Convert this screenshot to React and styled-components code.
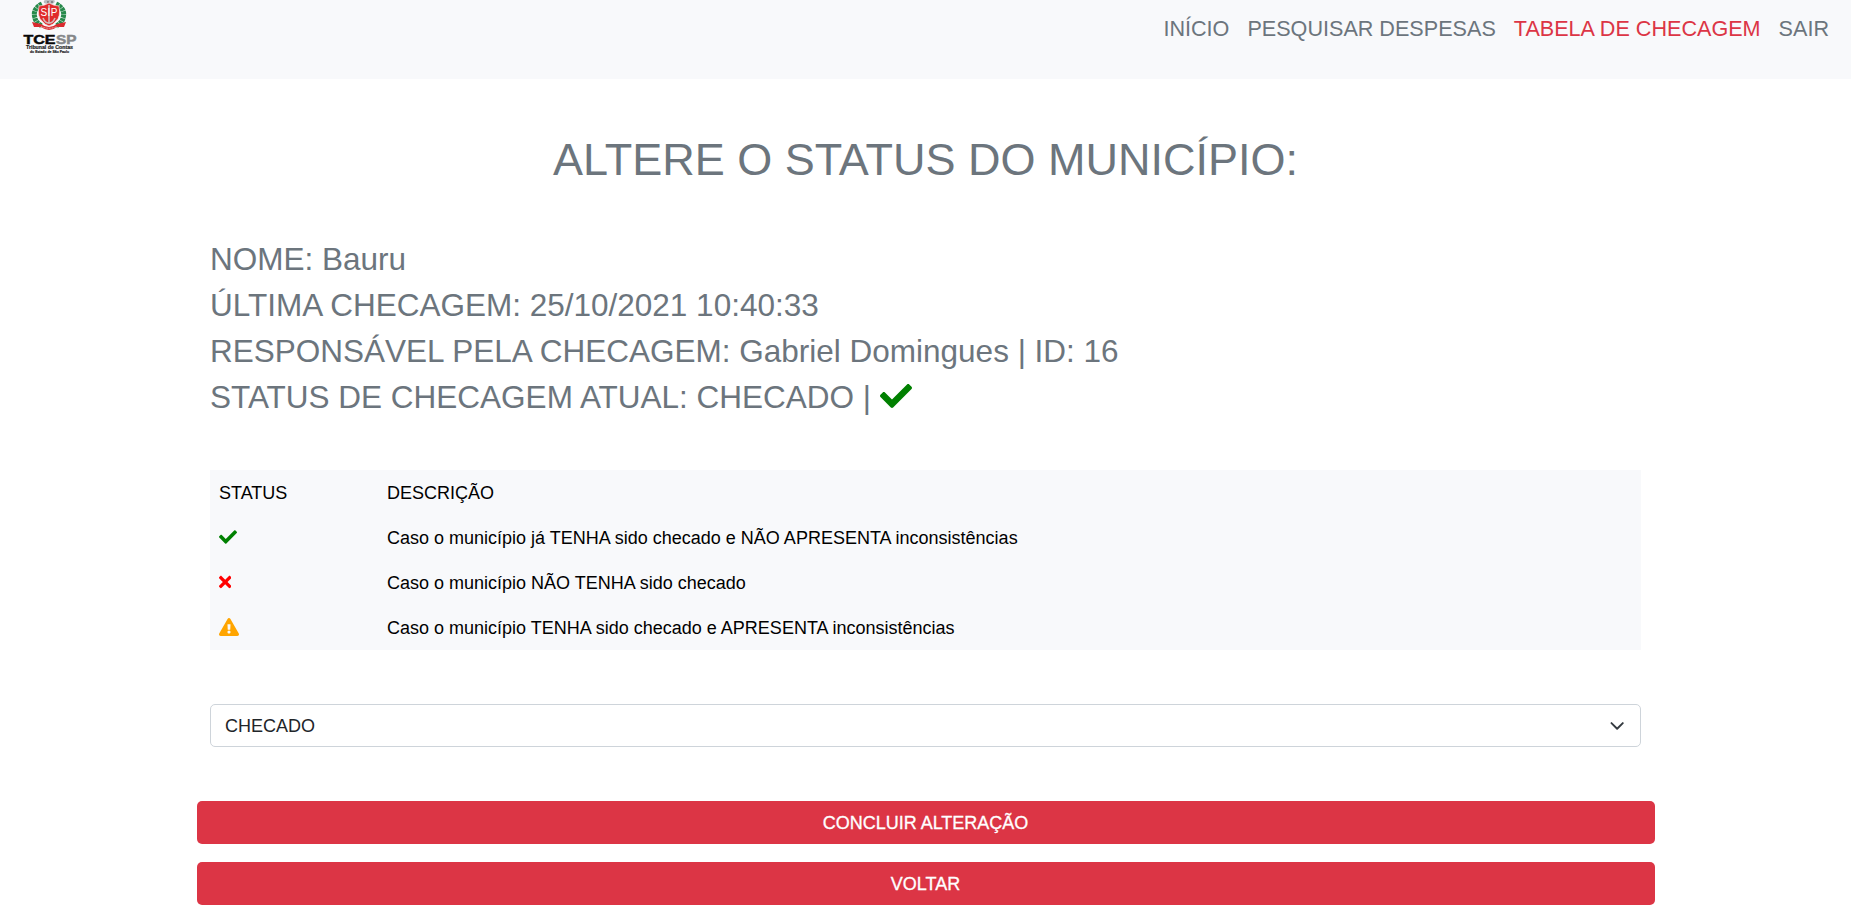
import React from "react";
import styled, { createGlobalStyle } from "styled-components";
import { FaCheck, FaTimes, FaExclamationTriangle } from "react-icons/fa";

const GlobalStyle = createGlobalStyle`
  *, *::before, *::after { box-sizing: border-box; }
  body {
    margin: 0;
    overflow: hidden;
    background: #fff;
    color: #000;
    font: 18px/27px "Liberation Sans", Arial, sans-serif;
  }
`;

const Navbar = styled.header`
  display: flex;
  justify-content: space-between;
  align-items: flex-start;
  height: 78.5px;
  padding: 0 22px;
  background: #f8f9fb;
`;

const Brand = styled.a`
  display: block;
  width: 56px;
  height: 56px;
  svg { display: block; }
`;

const Nav = styled.nav`
  display: flex;
  gap: 18px;
  padding-top: 12px;
`;

const NavLink = styled.a`
  font-size: 21.6px;
  line-height: 33px;
  color: ${(p) => (p.$active ? "#dc3545" : "#6c757d")};
`;

const Main = styled.main`
  width: 1458px;
  margin: 0 auto;
`;

const Title = styled.h1`
  margin: 54.5px 0 0;
  font-size: 45px;
  font-weight: 400;
  line-height: 54px;
  text-align: center;
  color: #6c757d;
`;

const Content = styled.section`
  padding: 0 14px 0 13.5px;
`;

const Info = styled.div`
  margin-top: 49px;
  font-size: 31.5px;
  line-height: 46px;
  color: #6c757d;
`;

const InfoLine = styled.p`
  margin: 0;
  svg { vertical-align: -4px; }
`;

const Table = styled.table`
  width: 100%;
  margin-top: 50px;
  border-collapse: collapse;
  background: #f8f9fb;
`;

const Cell = styled.td`
  height: 45px;
  padding: 1px 9px 0;
  width: ${(p) => p.$width || "auto"};
  svg { display: block; margin-top: -2px; }
`;

const Select = styled.div`
  display: flex;
  align-items: center;
  justify-content: space-between;
  height: 43px;
  margin-top: 54px;
  padding: 1px 14px 0 14px;
  border: 1px solid #ced4da;
  border-radius: 5px;
  color: #212529;
`;

const Actions = styled.div`
  display: grid;
  gap: 18px;
  margin-top: 54px;
`;

const Button = styled.button`
  height: 43px;
  padding: 1px 0 0;
  border: 0;
  border-radius: 5px;
  background: #dc3545;
  color: #fff;
  font: inherit;
  -webkit-text-stroke: 0.3px #fff;
`;

function Logo() {
  return (
    <svg width="56" height="56" viewBox="0 0 56 56" fontFamily="Liberation Sans, Arial, sans-serif">
      <path d="M22 3 Q21 0 24 0 H31 Q34 0 32 3 L28 5Z" fill="#b9bdc0" />
      <path d="M25 2h2M29 2h2" stroke="#555" />
      <path d="M20 4Q10 9 13 18Q14 23 20 26" fill="none" stroke="#278a4b" strokeWidth="5" strokeDasharray="3 .5" />
      <path d="M34 4Q44 9 41 18Q40 23 34 26" fill="none" stroke="#278a4b" strokeWidth="5" strokeDasharray="3 .5" />
      <path d="M17 6Q22 6 27 3Q32 6 37 6Q39 17 34 21Q31 25 27 26Q23 25 20 21Q15 17 17 6Z" fill="#e02a2b" stroke="#f6dcda" strokeWidth=".7" />
      <path d="M27 5V24M21 18Q23 23 27 23Q31 23 33 18" fill="none" stroke="#d3b9b9" strokeWidth="1.6" />
      <text x="27" y="15.5" fontSize="10" textAnchor="middle" fill="#fff" textLength="17">SIP</text>
      <path d="M10 22L19 24Q27 30 35 24L44 22L42 27L35 27Q27 33 19 27L12 27Z" fill="#d92b2e" />
      <path d="M19 26.5Q27 30 35 26.5" fill="none" stroke="#f3dada" strokeWidth=".8" strokeDasharray="1 .6" />
      <g fontWeight="700" strokeWidth=".5">
        <text x="1.5" y="43.5" fontSize="13.5" textLength="32" lengthAdjust="spacingAndGlyphs" fill="#080808" stroke="#080808">TCE</text>
        <text x="34" y="43.5" fontSize="13.5" textLength="20.5" lengthAdjust="spacingAndGlyphs" fill="#858789" stroke="#858789">SP</text>
      </g>
      <g fontWeight="700" fill="#222" stroke="#222" strokeWidth=".2">
        <text x="4" y="49" fontSize="5.2" textLength="47" lengthAdjust="spacingAndGlyphs">Tribunal de Contas</text>
        <text x="8" y="53.2" fontSize="3.7" textLength="39" lengthAdjust="spacingAndGlyphs">do Estado de São Paulo</text>
      </g>
    </svg>
  );
}

function Chevron() {
  return (
    <svg width="18" height="18" viewBox="0 0 16 16" fill="none">
      <path d="M2 5l6 6 6-6" transform="translate(1.4 1.2) scale(.84)" stroke="#343a40" strokeWidth="2" strokeLinecap="round" strokeLinejoin="round" />
    </svg>
  );
}

const CrossIcon = styled(FaTimes)`
  width: 12.4px;
  height: 18px;
`;

const rows = [
  [<FaCheck color="green" size={18} />, "Caso o município já TENHA sido checado e NÃO APRESENTA inconsistências"],
  [<CrossIcon color="red" />, "Caso o município NÃO TENHA sido checado"],
  [<FaExclamationTriangle color="orange" size={20} />, "Caso o município TENHA sido checado e APRESENTA inconsistências"],
];

export default function App() {
  return (
    <>
      <GlobalStyle />
      <Navbar>
        <Brand><Logo /></Brand>
        <Nav>
          <NavLink>INÍCIO</NavLink>
          <NavLink>PESQUISAR DESPESAS</NavLink>
          <NavLink $active>TABELA DE CHECAGEM</NavLink>
          <NavLink>SAIR</NavLink>
        </Nav>
      </Navbar>
      <Main>
        <Title>ALTERE O STATUS DO MUNICÍPIO:</Title>
        <Content>
          <Info>
            <InfoLine>NOME: Bauru</InfoLine>
            <InfoLine>ÚLTIMA CHECAGEM: 25/10/2021 10:40:33</InfoLine>
            <InfoLine>RESPONSÁVEL PELA CHECAGEM: Gabriel Domingues | ID: 16</InfoLine>
            <InfoLine>STATUS DE CHECAGEM ATUAL: CHECADO | <FaCheck color="green" size={32} /></InfoLine>
          </Info>
          <Table>
            <tbody>
              <tr>
                <Cell $width="168px">STATUS</Cell>
                <Cell>DESCRIÇÃO</Cell>
              </tr>
              {rows.map(([icon, text]) => (
                <tr key={text}>
                  <Cell>{icon}</Cell>
                  <Cell>{text}</Cell>
                </tr>
              ))}
            </tbody>
          </Table>
          <Select>CHECADO<Chevron /></Select>
        </Content>
        <Actions>
          <Button>CONCLUIR ALTERAÇÃO</Button>
          <Button>VOLTAR</Button>
        </Actions>
      </Main>
    </>
  );
}
